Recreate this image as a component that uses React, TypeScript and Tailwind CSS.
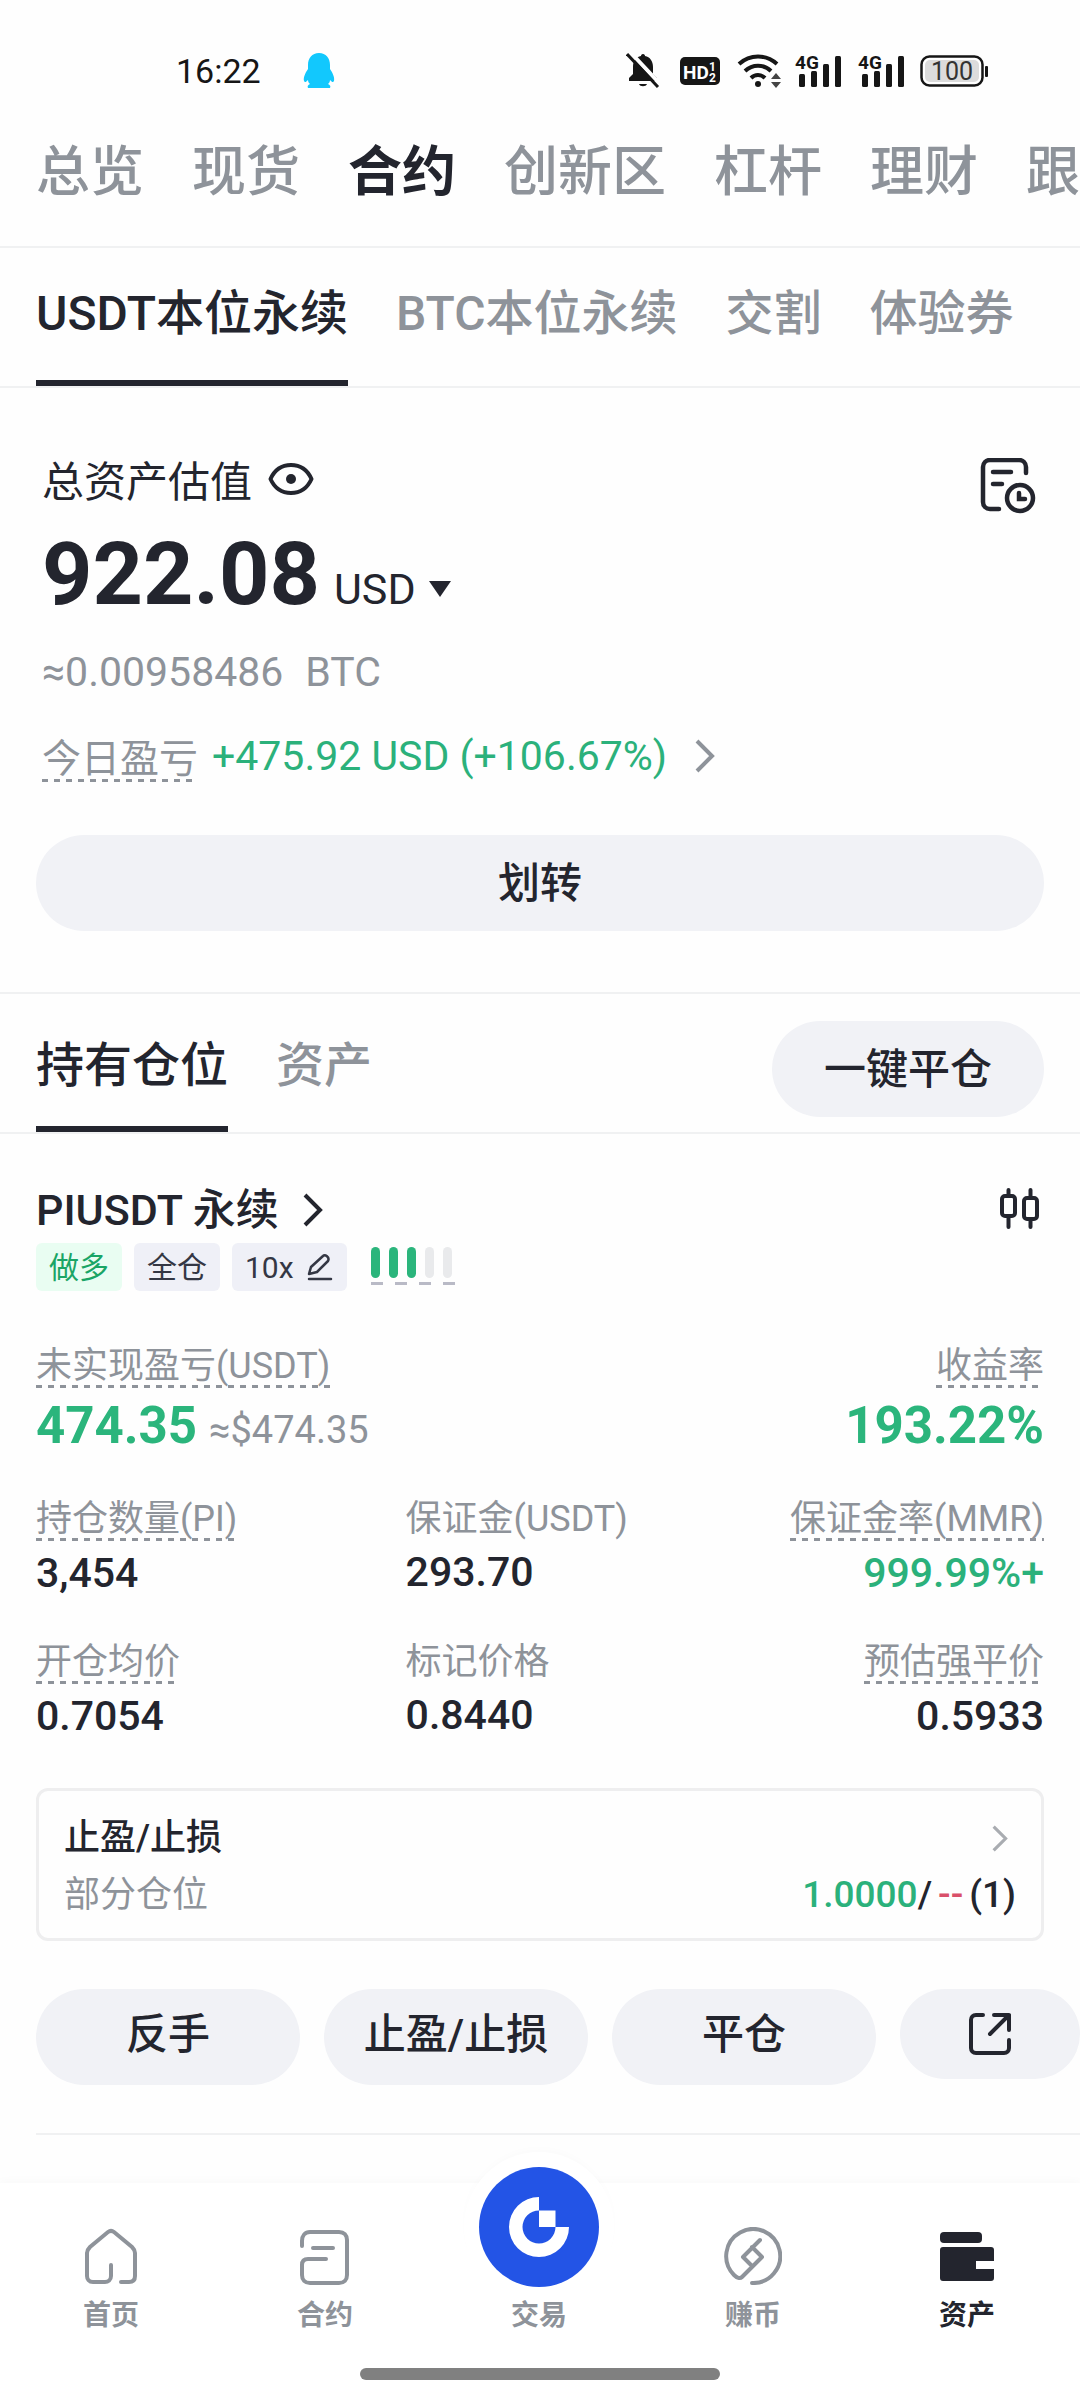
import type { ReactNode } from 'react';

const DASHED =
    'bg-[repeating-linear-gradient(to_right,#8e939a_0_6px,transparent_6px_12px)] bg-[length:100%_3px] bg-bottom bg-no-repeat';

const accountTabs = ['总览', '现货', '合约', '创新区', '杠杆', '理财', '跟'];
const contractTabs = ['USDT本位永续', 'BTC本位永续', '交割', '体验券'];

type Stat = { label: string; value: string; dashed?: boolean; green?: boolean };

const stats: Stat[][] = [
    [
        { label: '持仓数量(PI)', value: '3,454', dashed: true },
        { label: '保证金(USDT)', value: '293.70' },
        { label: '保证金率(MMR)', value: '999.99%+', dashed: true, green: true },
    ],
    [
        { label: '开仓均价', value: '0.7054', dashed: true },
        { label: '标记价格', value: '0.8440' },
        { label: '预估强平价', value: '0.5933', dashed: true },
    ],
];

function Chevron({ className }: { className: string }) {
    return (
        <svg className={className} viewBox="0 0 20 34" fill="none" stroke="currentColor" strokeWidth="4" aria-hidden="true">
            <path d="M2 2l15 15L2 32" />
        </svg>
    );
}

function Signal() {
    return (
        <svg className="w-[48px] h-[34px] overflow-visible" viewBox="0 0 48 34" fill="#161616" aria-hidden="true">
            <text x="0" y="15" fontSize="19" fontWeight="700" fontFamily="Roboto, sans-serif">4G</text>
            <rect x="4" y="20" width="6" height="13" rx="1.5" />
            <rect x="16" y="17" width="6" height="16" rx="1.5" />
            <rect x="28" y="10" width="6" height="23" rx="1.5" />
            <rect x="40" y="2" width="6" height="31" rx="1.5" />
        </svg>
    );
}

function StatusBar() {
    return (
        <header className="flex h-[94px] items-center pt-12 pl-[176px] pr-[92px]">
            <time className="text-[34px] leading-[40px] text-[#161616]">16:22</time>
            <svg className="ml-[42px] w-[32px] h-[36px]" viewBox="0 0 32 36" fill="#12c8fd" aria-hidden="true">
                <path d="M16 0C9 0 5 5 5 12v4C3 19 0 24 1 28c1 2 2 1 4-1 0 2 1 3 2 4-2 1-3 2-2 4h22c1-2 0-3-2-4 1-1 2-2 2-4 2 2 3 3 4 1 1-4-2-9-4-12v-4C27 5 23 0 16 0z" />
            </svg>
            <div className="ml-auto flex items-center">
                <svg className="w-[34px] h-[36px] mr-[20px]" viewBox="0 0 34 36" aria-hidden="true">
                    <path fill="#161616" d="M17 1c1.5 0 2 1 2 2 5 1 8 5 8 11v7l4 4v3H3v-3l4-4v-7C7 8 10 4 15 3c0-1 .5-2 2-2zM13 31h8c-1 3-7 3-8 0z" />
                    <path stroke="#fff" strokeWidth="4" d="M5 0l30 32" />
                    <path stroke="#161616" strokeWidth="3" d="M1 1l31 33" />
                </svg>
                <svg className="w-[40px] h-[28px] mr-[17px]" viewBox="0 0 40 28" aria-hidden="true">
                    <rect width="40" height="28" rx="5" fill="#161616" />
                    <g fill="#fff" fontFamily="Roboto, sans-serif" fontWeight="700">
                        <text x="3" y="22" fontSize="19">HD</text>
                        <text x="29" y="14" fontSize="12">1</text>
                        <text x="29" y="25" fontSize="12">2</text>
                    </g>
                </svg>
                <svg className="w-[46px] h-[34px] mr-[12px]" viewBox="0 0 46 34" fill="none" stroke="#161616" strokeWidth="4" aria-hidden="true">
                    <path d="M2 10c11-10 27-10 38 0M8 17c7.5-7 18.5-7 26 0M14 24c4-4 10-4 14 0" />
                    <circle cx="21" cy="30" r="3" fill="#161616" stroke="none" />
                    <path d="M39 19l5 6H34zM39 34l5-6H34z" fill="#444" stroke="none" />
                </svg>
                <Signal />
                <span className="w-[15px]" />
                <Signal />
                <svg className="ml-[14px] w-[68px] h-[32px]" viewBox="0 0 68 32" aria-hidden="true">
                    <rect x="1.5" y="1.5" width="61" height="29" rx="8" fill="#fff" stroke="#161616" strokeWidth="2.5" />
                    <rect x="5" y="5" width="54" height="22" rx="5" fill="#dcdcdc" />
                    <rect x="65" y="11" width="3" height="11" rx="1" fill="#161616" />
                    <text x="32" y="25" textAnchor="middle" fontSize="25" fill="#333" fontFamily="Roboto, sans-serif">100</text>
                </svg>
            </div>
        </header>
    );
}

function AccountTabs() {
    return (
        <nav className="flex h-[154px] items-center gap-12 overflow-hidden whitespace-nowrap border-b-2 border-[#f0f1f2] pt-1.5 pl-9 text-[54px] leading-[60px]">
            {accountTabs.map((tab) => (
                <button
                    key={tab}
                    type="button"
                    className={tab === '合约' ? 'shrink-0 font-bold text-[#23252e]' : 'shrink-0 font-medium text-[#8e939a]'}
                >
                    {tab}
                </button>
            ))}
        </nav>
    );
}

function ContractTabs() {
    return (
        <nav className="flex h-[140px] gap-12 overflow-hidden whitespace-nowrap border-b-2 border-[#f0f1f2] px-9 text-[48px] font-medium">
            {contractTabs.map((tab, i) => (
                <button
                    key={tab}
                    type="button"
                    className={i === 0 ? 'shrink-0 border-b-6 border-[#23252e]' : 'shrink-0 border-b-6 border-transparent text-[#8e939a]'}
                >
                    {tab}
                </button>
            ))}
        </nav>
    );
}

function Overview() {
    return (
        <section className="border-b-2 border-[#f0f1f2] px-9 pt-[70px] pb-[61px]">
            <div className="px-[6px]">
                <div className="flex items-start">
                    <h2 className="text-[42px] leading-[50px]">总资产估值</h2>
                    <button type="button" aria-label="隐藏资产" className="mt-1 ml-4">
                        <svg className="w-[46px] h-[34px]" viewBox="0 0 46 34" fill="none" stroke="currentColor" strokeWidth="4" aria-hidden="true">
                            <path d="M2.5 17C7 7 14 3 23 3s16 4 20.5 14C39 27 32 31 23 31S7 27 2.5 17z" strokeLinejoin="round" />
                            <circle cx="23" cy="17" r="5" fill="currentColor" stroke="none" />
                        </svg>
                    </button>
                    <button type="button" aria-label="历史记录" className="mr-0.5 ml-auto">
                        <svg className="w-[56px] h-[56px]" viewBox="0 0 56 56" fill="none" stroke="currentColor" strokeWidth="4.5" strokeLinecap="round" aria-hidden="true">
                            <path d="M19 51H10c-4 0-7-3-7-7V9c0-4 3-7 7-7h29c4 0 7 3 7 7v6M13 14h18M13 26h9" />
                            <circle cx="40" cy="40" r="13" />
                            <path d="M39 35v6h6" />
                        </svg>
                    </button>
                </div>
                <div className="mt-4 flex items-baseline">
                    <strong className="text-[88px] leading-[88px] font-bold">922.08</strong>
                    <label className="relative ml-3.5 flex items-center">
                        <select aria-label="计价货币" className="appearance-none bg-transparent pr-[36px] text-[43px] leading-[48px]">
                            <option>USD</option>
                        </select>
                        <svg className="pointer-events-none absolute right-0 w-[24px] h-[18px]" viewBox="0 0 24 18" fill="currentColor" aria-hidden="true">
                            <path d="M1 1h22L12 17z" />
                        </svg>
                    </label>
                </div>
                <p className="mt-[29px] flex gap-[22px] text-[41px] leading-[50px] text-[#8e939a]">
                    <span>≈0.00958486</span>
                    <span>BTC</span>
                </p>
                <div className="mt-[37px] flex items-start">
                    <span className={`pt-[5px] pb-[3px] text-[39px] leading-[40px] text-[#8e939a] ${DASHED}`}>今日盈亏</span>
                    <a href="#pnl" className="ml-3.5 flex items-center text-[41px] leading-[44px] text-[#2bb17b]">
                        +475.92 USD (+106.67%)
                        <Chevron className="ml-7 w-[20px] h-[34px] text-[#8e939a]" />
                    </a>
                </div>
            </div>
            <button type="button" className="mt-[53px] h-24 w-full rounded-full bg-[#f1f2f6] text-[42px] font-medium">
                划转
            </button>
        </section>
    );
}

function PositionTabs() {
    return (
        <div className="flex h-[140px] items-stretch gap-12 border-b-2 border-[#f0f1f2] px-9">
            <button type="button" className="border-b-6 border-[#23252e] pt-3 text-[48px] font-medium">
                持有仓位
            </button>
            <button type="button" className="border-b-6 border-transparent pt-3 text-[48px] font-medium text-[#8e939a]">
                资产
            </button>
            <button type="button" className="mb-[15px] ml-auto h-24 self-end rounded-full bg-[#f1f2f6] px-[52px] text-[42px] font-medium">
                一键平仓
            </button>
        </div>
    );
}

function Tags() {
    return (
        <div className="mt-[9px] flex h-12 items-stretch gap-3 text-[30px]">
            <span className="flex items-center rounded-md bg-[#e9fdf2] px-[13px] text-[#1aa566]">做多</span>
            <span className="flex items-center rounded-md bg-[#eff0f7] px-[13px] text-[#343744]">全仓</span>
            <button type="button" className="flex items-center gap-3 rounded-md bg-[#eff0f7] px-[13px] text-[#343744]">
                10x
                <svg className="w-[28px] h-[28px]" viewBox="0 0 28 28" fill="none" stroke="currentColor" strokeWidth="2.5" strokeLinecap="round" strokeLinejoin="round" aria-hidden="true">
                    <path d="M3 21l2-7L17 3c2-2 7 1 5 5L11 19z" />
                    <path d="M3 26h22" />
                </svg>
            </button>
            <svg className="ml-3 w-[86px] h-[48px]" viewBox="0 0 86 48" aria-label="风险等级">
                <g fill="#2bb57c">
                    <rect x="0" y="4" width="9" height="31" rx="4.5" />
                    <rect x="18" y="4" width="9" height="31" rx="4.5" />
                    <rect x="36" y="4" width="9" height="31" rx="4.5" />
                </g>
                <g fill="#e9eaec">
                    <rect x="54" y="4" width="9" height="31" rx="4.5" />
                    <rect x="72" y="4" width="9" height="31" rx="4.5" />
                </g>
                <path d="M0 40.5h86" stroke="#b9bac6" strokeWidth="3" strokeDasharray="12 12" />
            </svg>
        </div>
    );
}

function StatLabel({ dashed, children }: { dashed?: boolean; children: ReactNode }) {
    return (
        <dt className={`text-[36px] leading-[42px] text-[#8e939a] ${dashed ? `pb-px ${DASHED}` : ''}`}>{children}</dt>
    );
}

function StatCell({ stat, right }: { stat: Stat; right: boolean }) {
    return (
        <div className={right ? 'flex flex-col items-end' : 'flex flex-col items-start'}>
            <StatLabel dashed={stat.dashed}>{stat.label}</StatLabel>
            <dd className={`mt-2 text-[41px] leading-[48px] font-medium ${stat.green ? 'text-[#2bb17b]' : ''}`}>{stat.value}</dd>
        </div>
    );
}

function Position() {
    return (
        <section className="pt-[52px] pl-9">
            <div className="pr-9">
                <div className="flex items-center">
                    <a href="#piusdt" className="flex items-center text-[43px] leading-[48px] font-medium">
                        PIUSDT 永续
                        <Chevron className="ml-6 w-[20px] h-[34px]" />
                    </a>
                    <button type="button" aria-label="K线图" className="ml-auto">
                        <svg className="w-[46px] h-[44px]" viewBox="0 0 46 44" fill="none" stroke="currentColor" strokeWidth="4" strokeLinecap="round" aria-hidden="true">
                            <rect x="4" y="8" width="13" height="20" rx="3" />
                            <path d="M10.5 2v6M10.5 28v11M32.5 2v8M32.5 31v8" />
                            <rect x="26" y="10" width="13" height="21" rx="3" />
                        </svg>
                    </button>
                </div>
                <Tags />
                <dl className="mt-[54px] flex justify-between">
                    <div className="flex flex-col items-start">
                        <StatLabel dashed>未实现盈亏(USDT)</StatLabel>
                        <dd className="mt-[10px] flex items-baseline gap-3">
                            <strong className="text-[51px] leading-[56px] font-bold text-[#2bb57c]">474.35</strong>
                            <span className="text-[38px] leading-[40px] text-[#8e939a]">≈$474.35</span>
                        </dd>
                    </div>
                    <div className="flex flex-col items-end">
                        <StatLabel dashed>收益率</StatLabel>
                        <dd className="mt-[10px] text-[51px] leading-[56px] font-bold text-[#2bb57c]">193.22%</dd>
                    </div>
                </dl>
                {stats.map((row) => (
                    <dl key={row[0].label} className="mt-11 grid grid-cols-[22fr_19fr_19fr]">
                        {row.map((stat, i) => (
                            <StatCell key={stat.label} stat={stat} right={i === 2} />
                        ))}
                    </dl>
                ))}
                <button
                    type="button"
                    className="mt-12 block w-full rounded-[12px] border-3 border-[#eeeeef] px-[25px] pt-[27px] pb-[23px] text-[36px] leading-[40px]"
                >
                    <span className="flex items-center justify-between font-medium">
                        止盈/止损
                        <Chevron className="mr-[8px] w-[16px] h-[27px] text-[#a9acb1]" />
                    </span>
                    <span className="mt-[17px] flex items-center justify-between text-[#8e939a]">
                        部分仓位
                        <span className="text-[37px] font-medium text-[#23252e]">
                            <span className="text-[#2bb17b]">1.0000</span>/
                            <span className="px-1.5 text-[#d9506a]">--</span>(1)
                        </span>
                    </span>
                </button>
            </div>
            <div className="mt-12 grid grid-cols-[22fr_22fr_22fr_15fr] items-start gap-6 text-[42px] leading-[46px] font-medium">
                <button type="button" className="h-24 rounded-full bg-[#f1f2f6] pb-1">反手</button>
                <button type="button" className="h-24 rounded-full bg-[#f1f2f6] pb-1">止盈/止损</button>
                <button type="button" className="h-24 rounded-full bg-[#f1f2f6] pb-1">平仓</button>
                <button type="button" aria-label="分享" className="flex h-[90px] items-center justify-center rounded-full bg-[#f1f2f6]">
                    <svg className="w-[44px] h-[44px]" viewBox="0 0 44 44" fill="none" stroke="currentColor" strokeWidth="4" strokeLinecap="round" strokeLinejoin="round" aria-hidden="true">
                        <path d="M15 3H8C5 3 3 5 3 8v28c0 3 2 5 5 5h28c3 0 5-2 5-5v-8M26 3h15v15M41 3L22 22" />
                    </svg>
                </button>
            </div>
            <div className="mt-12 h-[2px] bg-[#f0f1f2]" />
        </section>
    );
}

function NavItem({ label, active, children }: { label: string; active?: boolean; children: ReactNode }) {
    return (
        <a
            href={`#${label}`}
            className={`flex h-[147px] flex-1 flex-col items-center justify-end ${active ? 'text-[#23252e]' : 'text-[#8e939a]'}`}
        >
            {children}
            <span className="shrink-0 text-[28px] leading-[28px] font-bold">{label}</span>
        </a>
    );
}

function BottomNav() {
    const icon = 'mb-[17px] w-[58px] h-[58px] shrink-0';
    return (
        <footer className="mt-12 bg-white pb-5 shadow-[0_-3px_8px_rgba(0,0,0,0.02)]">
            <nav className="flex pr-[6px] pl-[4px]">
                <NavItem label="首页">
                    <svg className={icon} viewBox="0 0 58 58" fill="none" stroke="currentColor" strokeWidth="4" strokeLinecap="round" aria-hidden="true">
                        <path d="M29 38v11c0 4-3 6-6 6H11c-4 0-6-3-6-6V26c0-3 1-4 3-6L26 5c2-1.5 4-1.5 6 0l18 15c2 2 3 3 3 6v23c0 4-2 6-6 6h-8" />
                    </svg>
                </NavItem>
                <NavItem label="合约">
                    <svg className={icon} viewBox="0 0 58 58" fill="none" stroke="currentColor" strokeWidth="4" strokeLinecap="round" aria-hidden="true">
                        <path d="M6 19v-5c0-5 3-9 8-9h29c5 0 8 3 8 8v35c0 5-3 8-8 8H14c-5 0-8-3-8-8V38c0-4 2-6 6-6h18M17 21h20" />
                    </svg>
                </NavItem>
                <NavItem label="交易">
                    <span className="shrink-0 rounded-full bg-white p-[15px] shadow-[0_-4px_6px_rgba(0,0,0,0.012)]">
                        <svg className="w-[120px] h-[120px]" viewBox="0 0 120 120" aria-hidden="true">
                            <circle cx="60" cy="60" r="60" fill="#2354e6" />
                            <path fill="#fff" d="M60 30a30 30 0 1 0 30 30H76.5A16.5 16.5 0 1 1 60 43.5z" />
                            <path fill="#fff" d="M60 43.5h16.5V60H60z" />
                        </svg>
                    </span>
                </NavItem>
                <NavItem label="赚币">
                    <svg className={icon} viewBox="0 0 58 58" fill="none" stroke="currentColor" strokeWidth="4" strokeLinecap="round" strokeLinejoin="round" aria-hidden="true">
                        <path d="M28 56a27 27 0 1 0-18-8c3 3 6 4 8 2l20-20L28 20M36 13L19 30l9 9" />
                    </svg>
                </NavItem>
                <NavItem label="资产" active>
                    <svg className={icon} viewBox="0 0 58 58" fill="currentColor" aria-hidden="true">
                        <rect x="2" y="5" width="42" height="11" rx="4" />
                        <path d="M5 20h48c2 0 3 1 3 3v11H38v8h18v9c0 2-1 3-3 3H5c-2 0-3-1-3-3V23c0-2 1-3 3-3z" />
                    </svg>
                </NavItem>
            </nav>
            <div className="mx-auto mt-[38px] h-3 w-1/3 rounded-full bg-[#808080]" />
        </footer>
    );
}

export default function App() {
    return (
        <div className="overflow-hidden bg-[#fefefe] font-[Roboto,'Noto_Sans_CJK_SC',sans-serif] text-[#23252e]">
            <StatusBar />
            <AccountTabs />
            <ContractTabs />
            <main>
                <Overview />
                <PositionTabs />
                <Position />
            </main>
            <BottomNav />
        </div>
    );
}
